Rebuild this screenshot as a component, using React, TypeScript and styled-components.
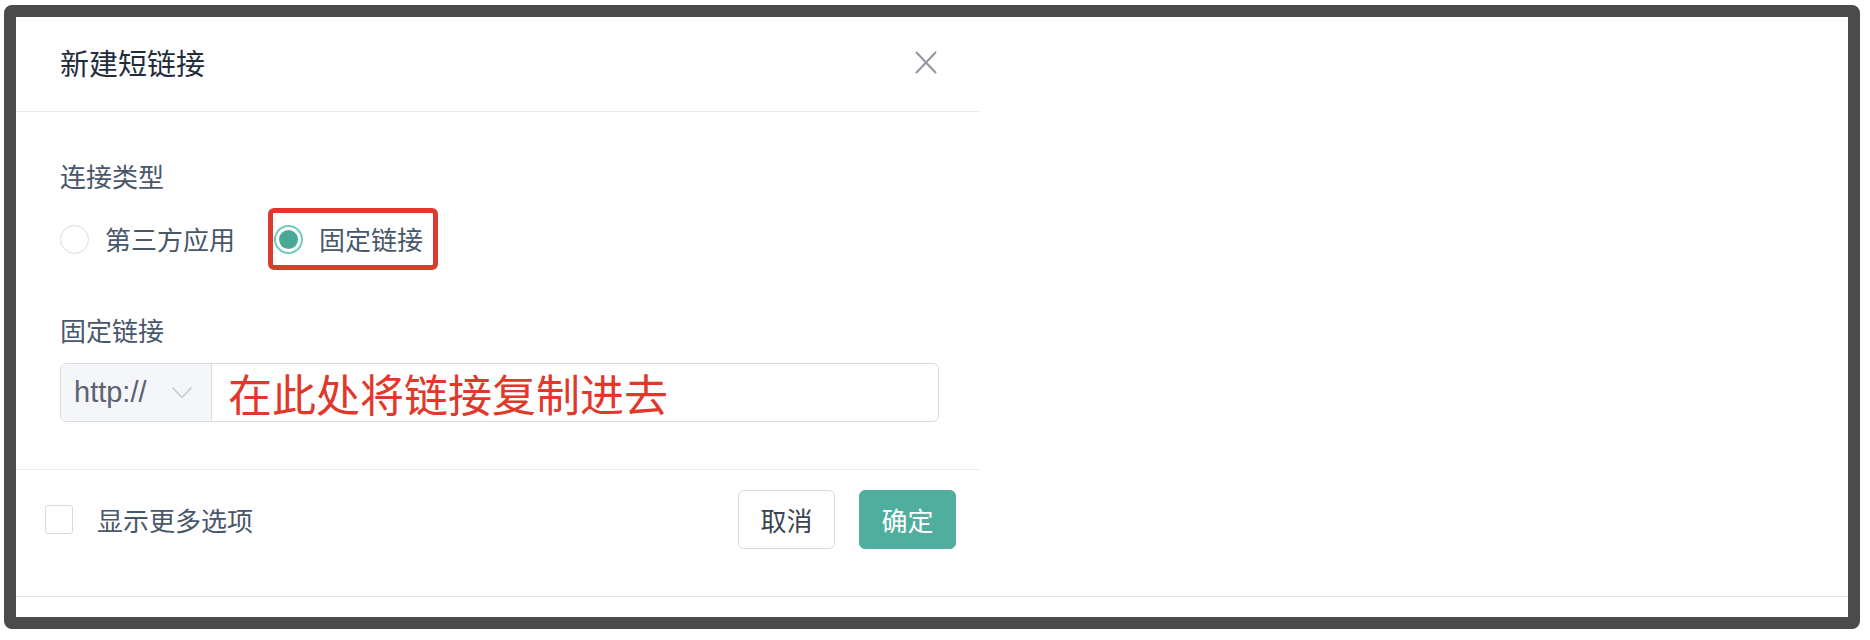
import styled, { createGlobalStyle } from "styled-components";

const GlobalStyle = createGlobalStyle`
  html, body {
    margin: 0;
    padding: 0;
    background: #ffffff;
  }

  body {
    font-family: "Noto Sans CJK SC", "Noto Sans", sans-serif;
  }
`;

const App = () => {
  return (
    <>
      <GlobalStyle />
      <Frame>
        <Stage>
          <Dialog>
            <DialogHeader>
              <DialogTitle>新建短链接</DialogTitle>
              <CloseButton aria-label="close">
                <svg width="22" height="23" viewBox="0 0 22 23" fill="none">
                  <path
                    d="M1.5 1.5 L20.5 21.5 M20.5 1.5 L1.5 21.5"
                    stroke="#9096a0"
                    strokeWidth="2"
                    strokeLinecap="round"
                  />
                </svg>
              </CloseButton>
            </DialogHeader>

            <DialogBody>
              <FieldLabel>连接类型</FieldLabel>
              <RadioRow>
                <RadioItem>
                  <RadioCircle />
                  <RadioText>第三方应用</RadioText>
                </RadioItem>
                <Highlight>
                  <RadioItem>
                    <RadioCircle checked>
                      <RadioDot />
                    </RadioCircle>
                    <RadioText>固定链接</RadioText>
                  </RadioItem>
                </Highlight>
              </RadioRow>

              <FieldLabel $top={45}>固定链接</FieldLabel>
              <InputGroup>
                <Prefix>
                  <PrefixText>http://</PrefixText>
                  <svg width="20" height="12" viewBox="0 0 20 12" fill="none">
                    <path
                      d="M1 1 L10 10.5 L19 1"
                      stroke="#c3c8d0"
                      strokeWidth="1.5"
                      strokeLinecap="round"
                      strokeLinejoin="round"
                    />
                  </svg>
                </Prefix>
                <InputField>在此处将链接复制进去</InputField>
              </InputGroup>
            </DialogBody>

            <DialogFooter>
              <CheckOption>
                <CheckBox />
                <CheckText>显示更多选项</CheckText>
              </CheckOption>
              <ButtonGroup>
                <Button>取消</Button>
                <Button primary>确定</Button>
              </ButtonGroup>
            </DialogFooter>
          </Dialog>
        </Stage>
        <BottomSpace />
      </Frame>
    </>
  );
};

export default App;

const Frame = styled.div`
  box-sizing: border-box;
  width: 1856px;
  height: 624px;
  margin: 5px 0 0 4px;
  border: 12px solid #4b4b4b;
  border-radius: 8px;
  background: #ffffff;

  display: flex;
  flex-direction: column;
`;

const Stage = styled.div`
  flex: 1;
  border-bottom: 1px solid #e3e5e8;

  display: flex;
  flex-direction: row;
  align-items: flex-start;
`;

const BottomSpace = styled.div`
  height: 20px;
`;

const Dialog = styled.div`
  width: 964px;

  display: flex;
  flex-direction: column;
`;

const DialogHeader = styled.div`
  box-sizing: border-box;
  height: 95px;
  padding: 0 43px 4px 44px;
  border-bottom: 1px solid #e8ecf0;

  display: flex;
  justify-content: space-between;
  align-items: center;
`;

const DialogTitle = styled.div`
  font-size: 29px;
  line-height: 30px;
  color: #1f2d3d;
`;

const CloseButton = styled.div`
  width: 22px;
  height: 23px;

  display: flex;
  justify-content: center;
  align-items: center;
`;

const DialogBody = styled.div`
  padding: 49px 41px 47px 44px;
  border-bottom: 1px solid #e8ecf0;

  display: flex;
  flex-direction: column;
`;

const FieldLabel = styled.div<{ $top?: number }>`
  margin-top: ${(p) => p.$top ?? 0}px;
  font-size: 26px;
  line-height: 30px;
  color: #48576a;
`;

const RadioRow = styled.div`
  margin-top: 17px;
  height: 62px;

  display: flex;
  flex-direction: row;
  align-items: center;
`;

const RadioItem = styled.div`
  display: flex;
  flex-direction: row;
  align-items: center;
  gap: 16px;
`;

const Highlight = styled.div`
  box-sizing: border-box;
  height: 62px;
  margin-left: 33px;
  padding: 0 10px 0 1px;
  border: 5px solid #dc3a2c;
  border-radius: 6px;

  display: flex;
  align-items: center;
`;

const RadioCircle = styled.div<{ checked?: boolean }>`
  box-sizing: border-box;
  width: 29px;
  height: 29px;
  border-radius: 50%;
  border: ${(p) => (p.checked ? "2px solid #6fcbbd" : "1px solid #d6dbe2")};
  background: #ffffff;

  display: flex;
  justify-content: center;
  align-items: center;
`;

const RadioDot = styled.div`
  width: 19px;
  height: 19px;
  border-radius: 50%;
  background: #4aa897;
`;

const RadioText = styled.span`
  font-size: 26px;
  line-height: 30px;
  color: #48576a;
`;

const InputGroup = styled.div`
  box-sizing: border-box;
  margin-top: 18px;
  height: 59px;
  border: 1px solid #d8dce3;
  border-radius: 6px;

  display: flex;
  flex-direction: row;
`;

const Prefix = styled.div`
  box-sizing: border-box;
  width: 151px;
  padding: 0 0 0 13px;
  background: #f4f6f9;
  border-right: 1px solid #d8dce3;
  border-radius: 5px 0 0 5px;

  display: flex;
  align-items: center;
  gap: 25px;
`;

const PrefixText = styled.span`
  font-family: "Liberation Sans", Arial, sans-serif;
  font-size: 29px;
  color: #5b6270;
`;

const InputField = styled.div`
  flex: 1;
  padding-left: 16px;
  font-size: 44px;
  line-height: 48px;
  color: #e0392b;

  display: flex;
  align-items: center;
`;

const DialogFooter = styled.div`
  padding: 20px 24px 0 29px;

  display: flex;
  justify-content: space-between;
  align-items: center;
`;

const CheckOption = styled.div`
  display: flex;
  align-items: center;
  gap: 24px;
`;

const CheckBox = styled.div`
  box-sizing: border-box;
  width: 28px;
  height: 29px;
  border: 1px solid #d6dbe2;
  border-radius: 3px;
  background: #ffffff;
`;

const CheckText = styled.span`
  font-size: 26px;
  line-height: 30px;
  color: #48576a;
`;

const ButtonGroup = styled.div`
  display: flex;
  gap: 24px;
`;

const Button = styled.div<{ primary?: boolean }>`
  box-sizing: border-box;
  width: 97px;
  height: 59px;
  border-radius: 6px;
  border: 1px solid ${(p) => (p.primary ? "#4fae9e" : "#d8dce3")};
  background: ${(p) => (p.primary ? "#4fae9e" : "#ffffff")};
  color: ${(p) => (p.primary ? "#ffffff" : "#3a4452")};
  font-size: 26px;

  display: flex;
  justify-content: center;
  align-items: center;
`;
